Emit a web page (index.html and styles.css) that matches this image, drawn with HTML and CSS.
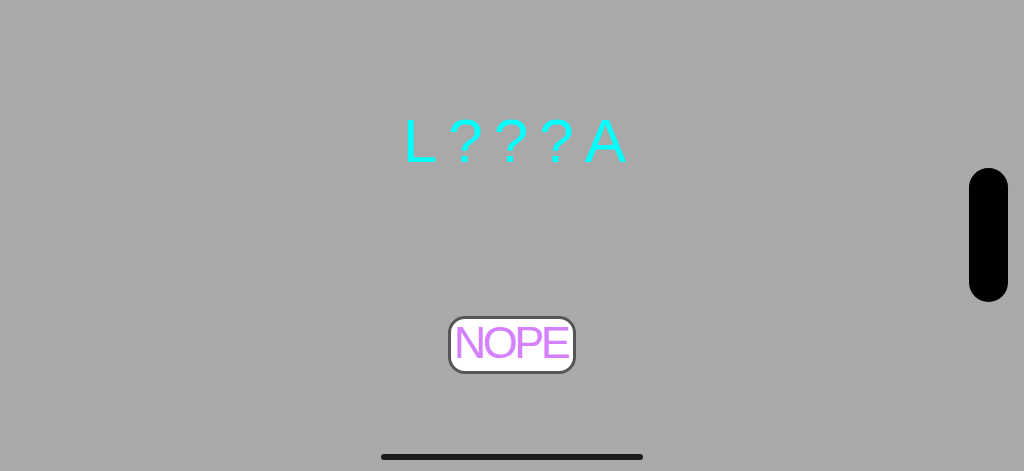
FILE: index.html
```html
<!DOCTYPE html>
<html lang="en">
  <head>
    <meta charset="utf-8" />
    <meta name="viewport" content="width=device-width, initial-scale=1" />
    <title>Guess</title>
    <link rel="stylesheet" href="styles.css">
  </head>
  <body>
    <div class="screen">
      <div class="game">
        <div class="game__word">L???A</div>
        <button class="game__btn">NOPE</button>
      </div>

      <!-- side handle + home indicator -->
      <div class="side-handle"></div>
      <div class="home-bar"></div>
    </div>
  </body>
</html>
```

FILE: styles.css
```css
html,
body {
  margin: 0;
  padding: 0;
}
body {
  background-color: #a9a9a9;
  font-family: "Liberation Sans", Arial, Helvetica, sans-serif;
}
.screen {
  position: relative;
  width: 100vw;
  height: 100vh;
  overflow: hidden;
}
.game {
  display: flex;
  flex-direction: column;
  align-items: center;
  padding-top: 110px;
}
.game__word {
  font-size: 62px;
  line-height: 62px;
  letter-spacing: 11px;
  padding-left: 16px;
  color: #00ffff;
}
.game__btn {
  margin-top: 144px;
  box-sizing: border-box;
  width: 128px;
  height: 58px;
  display: flex;
  align-items: center;
  justify-content: center;
  padding: 0 0 5px 0;
  background-color: white;
  border: 3px solid #555;
  border-radius: 17px;
  font-family: inherit;
  font-size: 45px;
  line-height: 45px;
  letter-spacing: -3.5px;
  text-indent: -3px;
  color: #d580ff;
}
.side-handle {
  position: absolute;
  top: 168px;
  left: 969px;
  width: 39px;
  height: 134px;
  border-radius: 20px;
  background-color: black;
}
.home-bar {
  position: absolute;
  top: 454px;
  left: 381px;
  width: 262px;
  height: 6px;
  border-radius: 3px;
  background-color: #1a1a1a;
}
```
